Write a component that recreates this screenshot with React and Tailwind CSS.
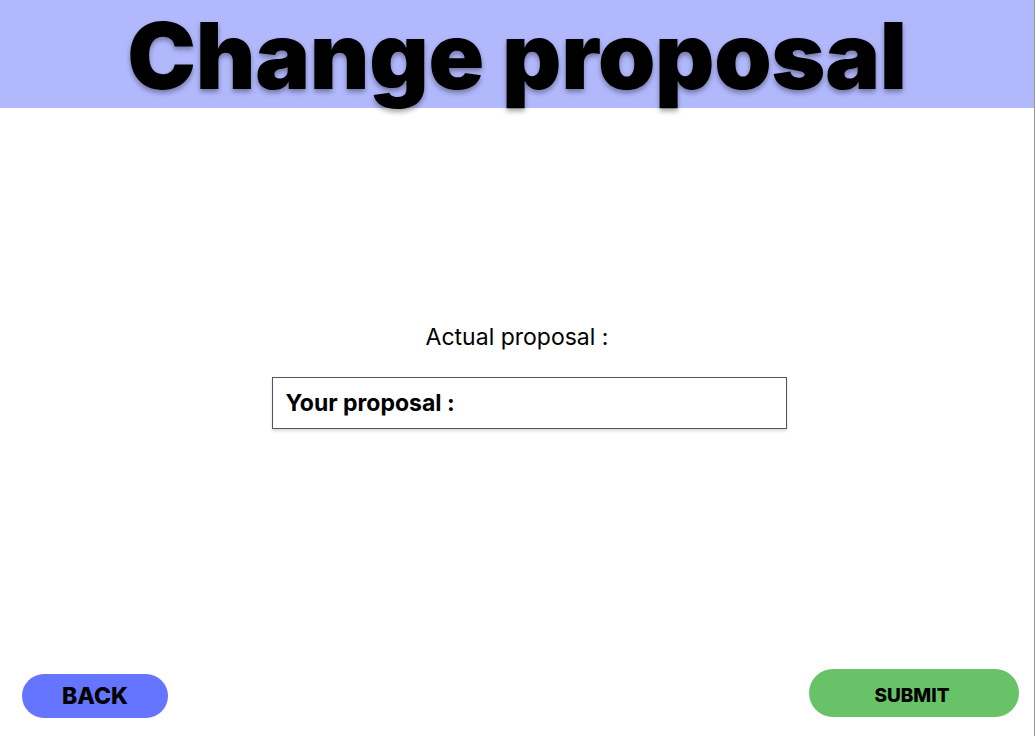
export default function App() {
  return (
    <div className="w-[1036px] h-[736px] bg-white flex" style={{ fontFamily: 'Inter, "Noto Sans", sans-serif' }}>
      <div className="w-[1035px] h-full flex flex-col border-r border-[#9a9a9a]">
        <header className="h-[108px] bg-[#b1b8fc] flex justify-center">
          <h1 className="text-[92px] font-black leading-[1.1] text-black tracking-[-0.3px] [text-shadow:0_3px_5px_rgba(0,0,0,0.35)] pt-[5px] whitespace-nowrap">
            Change proposal
          </h1>
        </header>
        <main className="flex-1 flex flex-col items-center pt-[218px]">
          <p className="text-[23px] text-black leading-none">Actual proposal :</p>
          <div className="mt-[28px] ml-[24px] w-[515px] h-[52px] border border-[#555] shadow-[0_2px_3px_rgba(0,0,0,0.15)] flex items-center px-[13px]">
            <span className="text-[23px] font-bold text-black">Your proposal :</span>
          </div>
        </main>
        <footer className="flex items-end justify-between pl-[22px] pr-[15px] pb-[18px]">
          <button className="w-[146px] h-[44px] rounded-full bg-[#6575ff] text-[23px] font-extrabold text-black">
            BACK
          </button>
          <button className="w-[210px] h-[48px] rounded-full bg-[#68c267] text-[19px] font-extrabold text-black mb-[1px] pt-[7px] pr-[4px]">
            SUBMIT
          </button>
        </footer>
      </div>
    </div>
  )
}
